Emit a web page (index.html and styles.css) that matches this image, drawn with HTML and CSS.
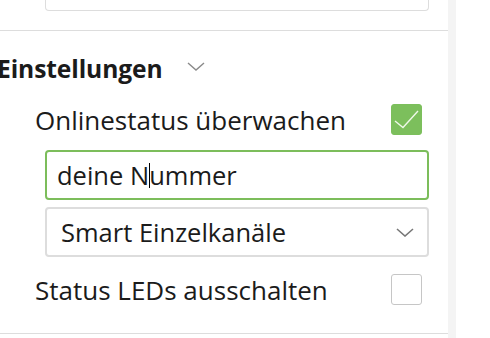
FILE: index.html
```html
<!DOCTYPE html>
<html lang="de">
<head>
    <meta charset="UTF-8" />
    <meta name="viewport" content="width=device-width, initial-scale=1.0" />
    <title>Einstellungen</title>
    <link rel="stylesheet" href="styles.css">
</head>
<body>
    <div class="layout">
        <div class="panel">
            <div class="field-top"></div>
            <div class="section">
                <div class="section-head">
                    <h2>Einstellungen</h2>
                    <svg class="chevron" width="18" height="9" viewBox="0 0 18 9">
                        <path d="M1 1 L9 8 L17 1" fill="none" stroke="#8a8a8a" stroke-width="1.4" />
                    </svg>
                </div>
                <div class="row first">
                    <span class="label">Onlinestatus überwachen</span>
                    <span class="check checked">
                        <svg width="31" height="31" viewBox="0 0 31 31">
                            <path d="M4 17 L12 23.5 L27 7" fill="none" stroke="#eef8e8" stroke-width="1.4" />
                        </svg>
                    </span>
                </div>
                <div class="input focused">
                    <span>deine N</span><span class="caret"></span><span>ummer</span>
                </div>
                <div class="input select">
                    <span>Smart Einzelkanäle</span>
                    <svg width="18" height="9" viewBox="0 0 18 9">
                        <path d="M1 1 L9 8 L17 1" fill="none" stroke="#777" stroke-width="1.6" />
                    </svg>
                </div>
                <div class="row">
                    <span class="label">Status LEDs ausschalten</span>
                    <span class="check"></span>
                </div>
            </div>
        </div>
        <div class="scrollbar"></div>
    </div>
</body>
</html>
```

FILE: styles.css
```css
body {
    margin: 0;
    background: #ffffff;
    color: #1b1b1b;
    font-family: "Open Sans", "Noto Sans", sans-serif;
    overflow: hidden;
}
.layout {
    display: flex;
    height: 338px;
}
.panel {
    width: 448px;
}
.scrollbar {
    width: 8px;
    background: #f4f4f4;
}
.field-top {
    margin-left: 45px;
    width: 382px;
    height: 10px;
    border: 1px solid #dddddd;
    border-top: none;
    border-radius: 0 0 4px 4px;
}
.section {
    margin-top: 19px;
    border-top: 1px solid #dddddd;
    border-bottom: 1px solid #dddddd;
    height: 302px;
}
.section-head {
    display: flex;
    align-items: center;
    height: 42px;
    margin-top: 16px;
    margin-left: -3px;
}
h2 {
    margin: 0;
    font-size: 24.6px;
    font-weight: 700;
    letter-spacing: -0.1px;
}
.chevron {
    margin-left: 24px;
    margin-top: -4px;
}
.row {
    display: flex;
    align-items: center;
    justify-content: space-between;
    height: 31px;
    margin: 17px 26px 0 35px;
    font-size: 26px;
}
.row.first {
    margin-top: 15px;
}
.check {
    width: 29px;
    height: 29px;
    border: 1px solid #c6c6c6;
    border-radius: 3px;
}
.check.checked {
    background: #7cbf5c;
    border-color: #7cbf5c;
}
.check svg {
    display: block;
    margin: -1px;
}
.input {
    display: flex;
    align-items: center;
    margin: 15px 19px 0 45px;
    height: 46px;
    padding: 0 10px;
    border: 2px solid #dddddd;
    border-radius: 4px;
    font-size: 25.5px;
}
.input.focused {
    border-color: #7cbd5b;
}
.caret {
    width: 1px;
    height: 25px;
    background: #000;
    margin: 0 -1px 0 0;
}
.select {
    margin-top: 7px;
    justify-content: space-between;
    padding: 0 13px 0 14px;
}
```
